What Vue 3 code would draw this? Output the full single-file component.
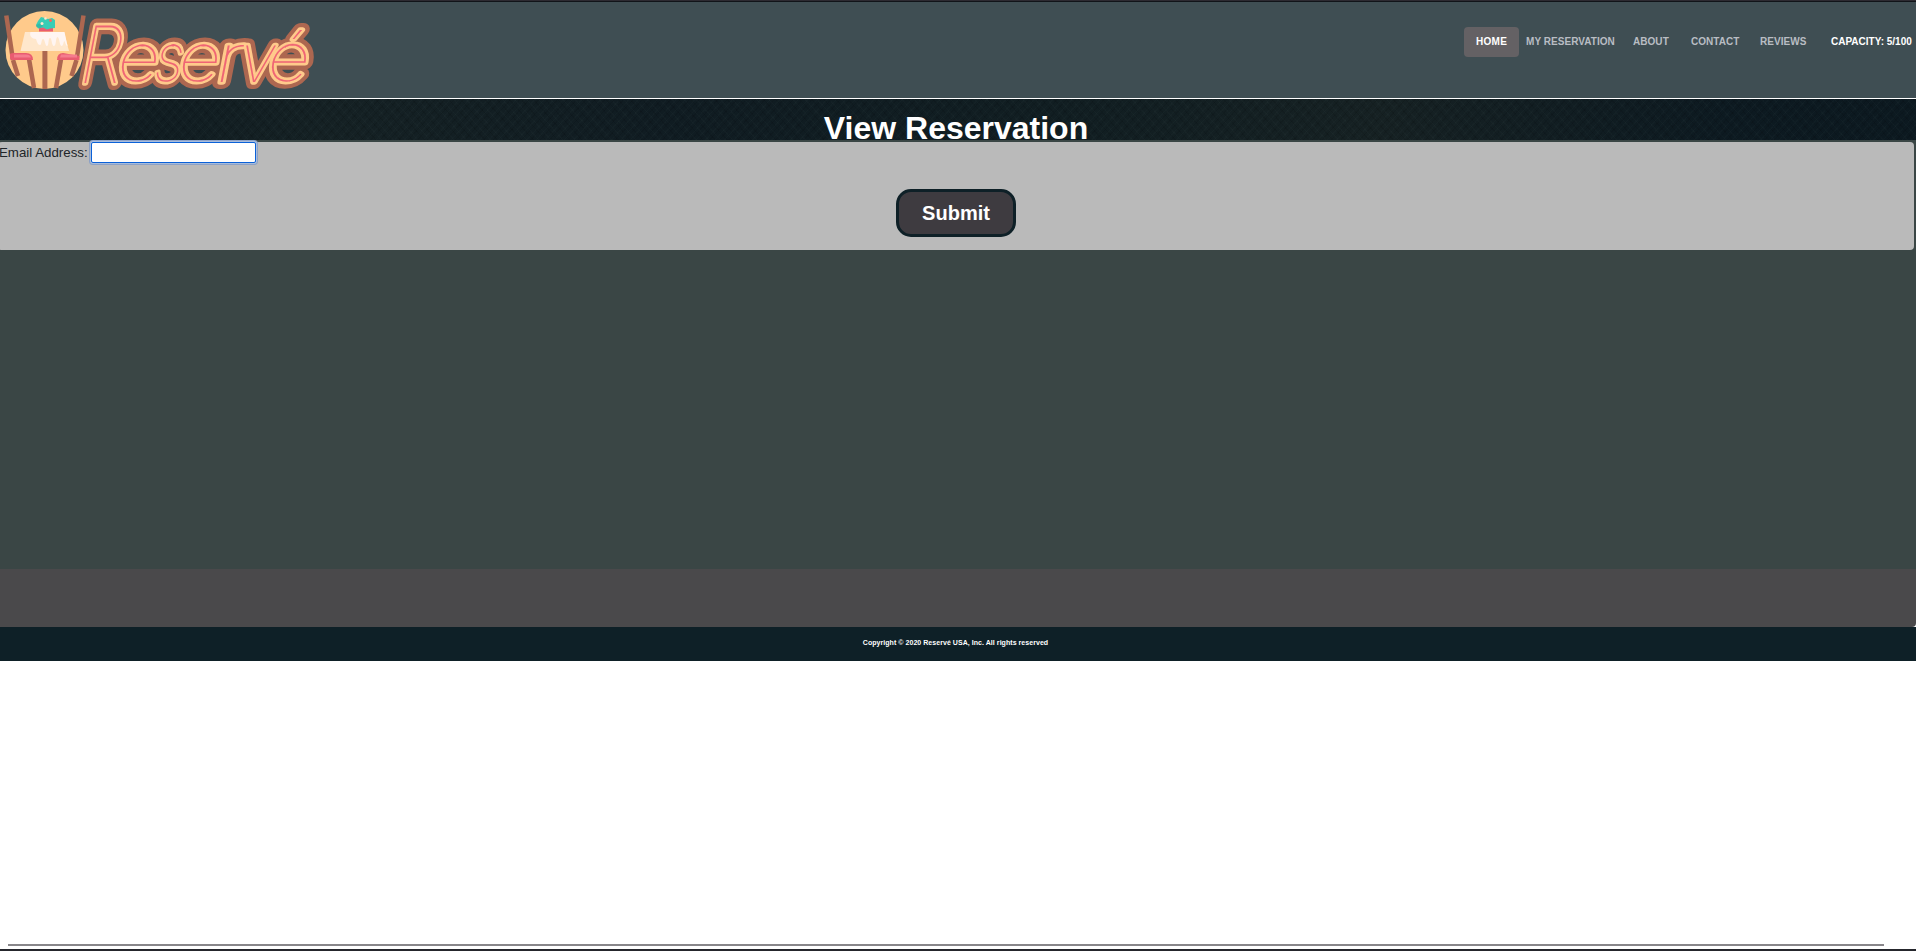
<script setup>
const links = [
  { label: 'HOME', kind: 'home' },
  { label: 'MY RESERVATION', kind: 'mine' },
  { label: 'ABOUT', kind: 'about' },
  { label: 'CONTACT', kind: 'contact' },
  { label: 'REVIEWS', kind: 'reviews' },
  { label: 'CAPACITY: 5/100', kind: 'capacity' },
]
const layers = ['outer', 'inner', 'core']
const letters = [
  { ch: 'R', x: 77, y: 83, w: 42, size: 79 },
  { ch: 'e', x: 114, y: 81, w: 42, size: 66 },
  { ch: 's', x: 151, y: 81, w: 29, size: 66 },
  { ch: 'e', x: 175, y: 81, w: 42, size: 66 },
  { ch: 'r', x: 213, y: 82, w: 26, size: 67 },
  { ch: 'v', x: 236, y: 82, w: 36, size: 67 },
  { ch: 'é', x: 264, y: 81, w: 42, size: 67 },
]
</script>

<template>
  <div class="page">
    <header class="header">
      <svg class="logo" width="330" height="96" viewBox="0 2 330 96" role="img" aria-label="Reservé">
        <circle cx="44.5" cy="50" r="39" fill="#ffca8b" />
        <path d="M42.4 50h5v39h-5z" fill="#ad6750" />
        <path d="M25 32h39l5 19H20.500z" fill="#ffe7cc" />
        <path d="M30 32h34.500l3 14c-1 0-2-2-3-5-1 0-1 5-3 5s-2-9-4-9-1 9-3.500 9-2-8-4-8-1 8-3 8-2-7-4-7-1 6-3 6-3-3-4-6c-4 0-7-3-5.500-7z" fill="#fff5f2" />
        <path d="M39 25l14 2v4.500H39z" fill="#e95c70" />
        <path d="M36 25l2-4 3-4 4 1 3 1 4-1 3 2v8l-5 .500-3 1-4-2-5 1z" fill="#38cdb5" />
        <path d="M36 25l5-2 2 3-3 2-4-1z" fill="#2ba99b" opacity=".5" />
        <circle cx="42" cy="23.500" r="1.500" fill="#ffe7cc" /><circle cx="50.500" cy="20.500" r="1.400" fill="#ff6258" /><circle cx="45.500" cy="18.500" r="1.300" fill="#ffe7cc" />
        <g fill="none" stroke="#ad6750" stroke-width="4.500">
          <path d="M6.300 15.500L13 60" /><path d="M83.500 15.500L76.500 60" />
          <path d="M13 60l5 16" /><path d="M76.500 60l-5 16" />
          <path d="M29 59l5 29" /><path d="M61 59l-5 29" />
        </g>
        <path d="M10 54.500q0-1.500 3-1.500h13q7 0 7 7H12q-2 0-2-2z" fill="#e95c70" />
        <path d="M79.500 56v4H57q0-7 6-7z" fill="#e95c70" />
        <path d="M14 54.500h12q4 0 5 3H14z" fill="#f57c8e" /><path d="M61 54.500h16v3H60z" fill="#f57c8e" />
        <g v-for="layer in layers" :key="layer" :class="['word', layer]">
          <g transform="translate(17 0) skewX(-11)">
            <text
              v-for="(l, i) in letters" :key="i" :x="l.x - 1" :y="l.y" :font-size="l.size"
              :textLength="l.w" lengthAdjust="spacingAndGlyphs"
            >{{ l.ch }}</text>
          </g>
        </g>
      </svg>
      <nav class="nav">
        <a v-for="link in links" :key="link.kind" :class="['link', link.kind]"><span>{{ link.label }}</span></a>
      </nav>
    </header>
    <section class="banner"><h1>View Reservation</h1></section>
    <main class="content">
      <form class="panel" @submit.prevent>
        <label class="field"><span>Email Address:</span><input type="email"></label>
        <button class="submit">Submit</button>
      </form>
    </main>
    <div class="strip"><div class="strip-fill"></div></div>
    <footer class="footer">Copyright © 2020 Reservé USA, Inc. All rights reserved</footer>
    <div class="rest"><div class="rule"></div></div>
  </div>
</template>

<style>
body { margin: 0; overflow: hidden; }
</style>
<style scoped>
* { box-sizing: border-box; }
.page { width: 1916px; height: 951px; display: flex; flex-direction: column; overflow: hidden; background: #fff; font-family: "Liberation Sans", Arial, sans-serif; }
.header { height: 99px; flex: none; display: flex; justify-content: space-between; background: #3f4e53; border-bottom: 1px solid #fff; box-shadow: inset 0 1px #2d2a31, inset 0 2px #111419; padding-top: 2px; }
.logo { display: block; flex: none; }
.word { font-family: Inter, Lato, sans-serif; font-weight: 100; stroke-linejoin: round; stroke-linecap: round; }
.outer { fill: #ad6750; stroke: #ad6750; stroke-width: 14px; }
.inner { fill: #ffca8b; stroke: #ffca8b; stroke-width: 5.5px; }
.core { fill: #ef6475; stroke: #ef6475; stroke-width: .1px; }
.nav { display: flex; padding-top: 25px; width: 452px; font-size: 10px; font-weight: bold; line-height: 30px; color: #b9bdc3; }
.link { height: 30px; white-space: nowrap; flex: none; letter-spacing: .05px; }
.home { width: 55px; padding-left: 12px; background: #646164; border-radius: 4px; color: #fff; letter-spacing: .3px; }
.mine { width: 114px; padding-left: 7px; }
.about { width: 58px; }
.contact { width: 69px; }
.reviews { width: 71px; }
.capacity { color: #fff; letter-spacing: 0; }
.banner { height: 41px; flex: none; overflow: hidden; background:
  repeating-linear-gradient(48deg, rgba(0,0,0,.1) 0 1px, transparent 1px 4px, rgba(70,90,90,.06) 4px 5px, transparent 5px 9px),
  repeating-linear-gradient(-48deg, rgba(0,0,0,.1) 0 1px, transparent 1px 3px, rgba(70,90,90,.06) 3px 4px, transparent 4px 7px),
  linear-gradient(90deg, #0e1a20, #152124 17%, #101c22 35%, #111e22 55%, #162123 72%, #0d1a21 90%, #0c1920); }
h1 { margin: 11px 4px 0 0; font-size: 32px; line-height: 37px; font-weight: bold; color: #fff; text-align: center; }
.content { height: 429px; flex: none; padding-top: 2px; background: #3a4645; }
.panel { width: 1916px; height: 108px; margin-left: -2px; border-radius: 4px; background: #bababa; display: flex; flex-direction: column; align-items: center; color: #212529; }
.field { width: 100%; height: 47px; display: flex; align-items: flex-start; font-size: 13.3px; line-height: 21px; white-space: nowrap; padding-left: 1px; }
.field span { width: 92px; flex: none; letter-spacing: 0; }
input { width: 165px; height: 21px; border: 1px solid #0b61d8; border-radius: 2px; background: #fff; outline: 0; box-shadow: 0 0 0 1px #a9bddb, 0 0 0 2px #8ba0c6; padding: 0; }
.submit { width: 120px; height: 48px; border: 3px solid #0e2027; border-radius: 15px; background: #3e3b40; color: #fff; font: bold 20px "Liberation Sans", Arial, sans-serif; padding: 0; }
.strip { height: 58px; flex: none; background: #fff; }
.strip-fill { height: 100%; background: #4a494b; border-bottom-right-radius: 4px; }
.footer { height: 34px; flex: none; background: #0e2027; color: #fff; font-size: 7px; font-weight: bold; letter-spacing: .05px; line-height: 31px; text-align: center; padding-right: 5px; }
.rest { flex: 1; display: flex; flex-direction: column; justify-content: flex-end; border-bottom: 2px solid #25262c; }
.rule { width: 1876px; height: 2px; margin: 0 0 3px 8px; background: #88868a; }
</style>
